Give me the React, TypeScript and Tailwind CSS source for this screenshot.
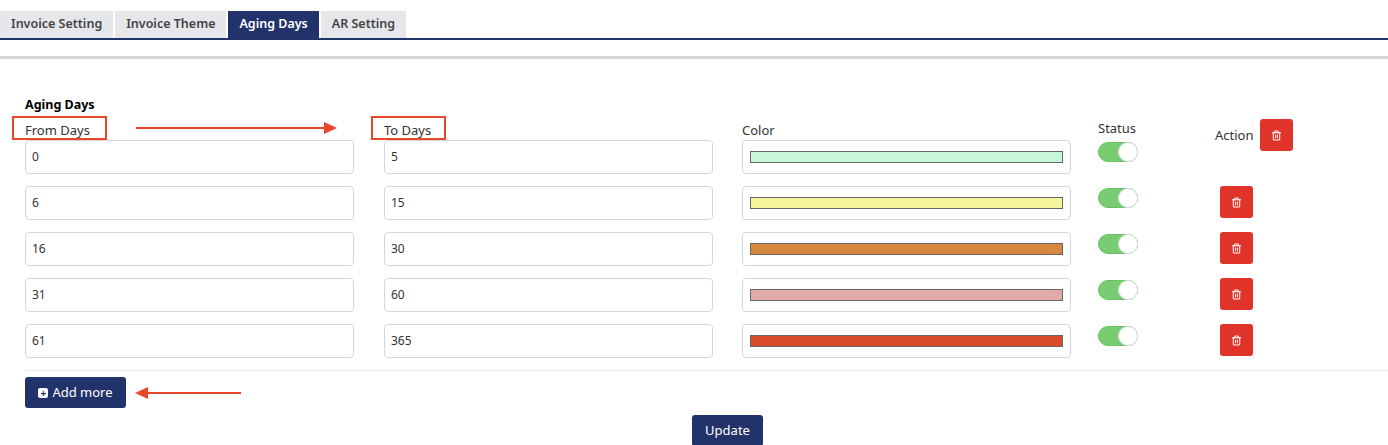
import { Trash2 } from "lucide-react";

const rows = [
  { from: "0", to: "5", color: "bg-[#c8f7d8]" },
  { from: "6", to: "15", color: "bg-[#f7f59c]" },
  { from: "16", to: "30", color: "bg-[#d6883f]" },
  { from: "31", to: "60", color: "bg-[#e2aaa6]" },
  { from: "61", to: "365", color: "bg-[#d84b2b]" },
];

const tabs = ["Invoice Setting", "Invoice Theme", "Aging Days", "AR Setting"];

function Toggle() {
  return (
    <div className="w-[40px] h-[20px] rounded-full bg-[#78cc72] relative border border-[#6cc066]">
      <div className="absolute right-[-1px] top-[-1px] w-[20px] h-[20px] rounded-full bg-white border border-[#dcdcdc]" />
    </div>
  );
}

function DelBtn() {
  return (
    <button className="w-[33px] h-[32px] rounded-[3px] bg-[#e0342a] flex items-center justify-center text-white">
      <Trash2 size={11} strokeWidth={2.2} />
    </button>
  );
}

export default function App() {
  return (
    <div className="w-[1388px] h-[445px] overflow-hidden bg-white text-[#333] font-['Open_Sans',sans-serif] text-[13px]">
      <div className="pt-[11px] flex border-b-2 border-[#22336b]">
        {tabs.map((t) => (
          <div
            key={t}
            className={`h-[27px] px-[11px] mr-[2px] flex items-center text-[12.5px] font-semibold ${
              t === "Aging Days" ? "bg-[#22336b] text-white" : "bg-[#e6e7ea] text-[#444]"
            }`}
          >
            {t}
          </div>
        ))}
      </div>
      <div className="mt-[16px] h-[3px] bg-[#d3d5db]" />

      <div className="pl-[25px] pt-[37px]">
        <div className="font-bold text-[12.5px] leading-[18px] text-black">Aging Days</div>
        <div className="flex mt-[6px] h-[20px] leading-[20px] items-start">
          <div className="w-[359px] relative">
            <span>From Days</span>
            <div className="absolute left-[-13px] top-[-4px] w-[95px] h-[24px] border-2 border-[#e8472c]" />
            <div className="absolute left-[111px] top-[7px] w-[190px] h-[2px] bg-[#e8472c]" />
            <div className="absolute left-[299px] top-[2px] w-0 h-0 border-y-[6px] border-y-transparent border-l-[13px] border-l-[#e8472c]" />
          </div>
          <div className="w-[358px] relative">
            <span>To Days</span>
            <div className="absolute left-[-13px] top-[-4px] w-[75px] h-[24px] border-2 border-[#e8472c]" />
          </div>
          <div className="w-[356px]">Color</div>
          <div className="w-[117px] mt-[-2px]">Status</div>
          <div className="flex items-center gap-[6px] mt-[-1px]">
            <span>Action</span>
            <DelBtn />
          </div>
        </div>

        <div className="flex flex-col gap-[12px]">
          {rows.map((r, i) => (
            <div key={i} className="flex items-start h-[34px]">
              <div className="w-[329px] h-[34px] border border-[#d4d6dc] rounded-[4px] flex items-center px-[6px] text-[12px]">
                {r.from}
              </div>
              <div className="w-[329px] ml-[30px] h-[34px] border border-[#d4d6dc] rounded-[4px] flex items-center px-[6px] text-[12px]">
                {r.to}
              </div>
              <div className="w-[329px] ml-[29px] h-[34px] border border-[#d4d6dc] rounded-[4px] flex items-center px-[7px]">
                <div className={`w-full h-[12px] border border-[#666] ${r.color}`} />
              </div>
              <div className="ml-[27px] mt-[2px] w-[122px]">
                <Toggle />
              </div>
              <div className={i === 0 ? "invisible" : ""}>
                <DelBtn />
              </div>
            </div>
          ))}
        </div>

        <div className="mt-[12px] h-px bg-[#e8eaee]" />
        <div className="mt-[6px] flex items-center">
          <button className="w-[101px] h-[31px] rounded-[3px] bg-[#22336b] text-white text-[13px] flex items-center justify-center gap-[4px]">
            <span className="w-[10px] h-[10px] bg-white rounded-[2px] text-[#22336b] text-[10px] leading-[10px] font-bold flex items-center justify-center">+</span>
            Add more
          </button>
          <div className="ml-[9px] w-0 h-0 border-y-[6px] border-y-transparent border-r-[13px] border-r-[#e8472c]" />
          <div className="w-[93px] h-[2px] bg-[#e8472c]" />
        </div>
        <div className="mt-[7px] flex">
          <button className="ml-[667px] w-[71px] h-[31px] rounded-[3px] bg-[#22336b] text-white text-[13px] flex items-center justify-center">
            Update
          </button>
        </div>
      </div>
    </div>
  );
}
